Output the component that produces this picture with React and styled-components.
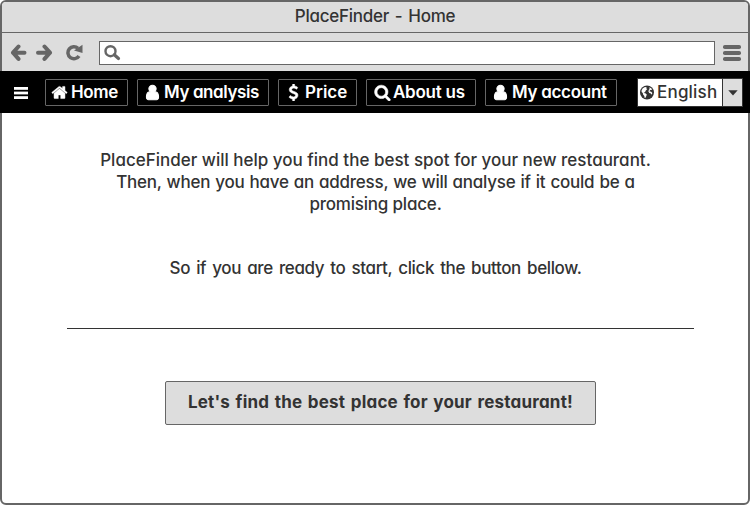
import React from 'react';
import styled, { createGlobalStyle } from 'styled-components';

const GlobalStyle = createGlobalStyle`
  * { box-sizing: border-box; }
  body { margin: 0; background: #fff; }
  button { font: inherit; margin: 0; cursor: pointer; }
`;

const Window = styled.div`
  width: 750px;
  height: 505px;
  display: flex;
  flex-direction: column;
  border: 2px solid #666;
  border-radius: 6px;
  background: #fff;
  color: #333;
  font: 500 17px/22px Inter, sans-serif;
  font-feature-settings: "cv11";
`;

const TitleBar = styled.header`
  height: 31px;
  flex: none;
  padding-top: 3px;
  background: #ddd;
  border-bottom: 1px solid #666;
  border-radius: 4px 4px 0 0;
  text-align: center;
  letter-spacing: -0.25px;
  word-spacing: 1.5px;
`;

const Toolbar = styled.div`
  height: 38px;
  flex: none;
  display: flex;
  align-items: flex-start;
  padding: 8px 7px 0 8px;
  background: #ddd;
  color: #666;
`;

const ToolIcon = styled.svg`
  display: block;
  flex: none;
  width: ${(p) => p.$w}px;
  height: ${(p) => p.$h}px;
  margin: ${(p) => p.$m};
  fill: ${(p) => (p.$line ? 'none' : 'currentColor')};
  stroke: ${(p) => (p.$line ? 'currentColor' : 'none')};
`;

const AddressBar = styled.div`
  flex: 1;
  height: 24px;
  margin-left: 16px;
  background: #fff;
  border: 1px solid #666;
`;

const Nav = styled.nav`
  height: 42px;
  flex: none;
  display: flex;
  margin: 0 -2px;
  padding: 8px 7px 0 14px;
  background: #000;
  color: #fff;
`;

const NavButton = styled.button`
  width: ${(p) => p.$w}px;
  height: 27px;
  display: flex;
  align-items: center;
  margin-right: 9px;
  padding: 0 0 1px ${(p) => p.$pad}px;
  background: #000;
  border: 1px solid #666;
  border-radius: 1px;
  color: #fff;
  font-weight: 600;
  white-space: nowrap;
  letter-spacing: ${(p) => p.$ls}px;
`;

const Glyph = styled.svg`
  display: block;
  flex: none;
  width: 17px;
  height: 17px;
  margin-right: ${(p) => p.$gap}px;
  fill: currentColor;
`;

const Select = styled.div`
  width: 106px;
  height: 29px;
  display: flex;
  margin: -1px 0 0 auto;
  background: #fff;
  border: 1px solid #333;
  color: #333;
`;

const SelectValue = styled.div`
  flex: 1;
  display: flex;
  align-items: center;
  padding: 0 0 1px 1px;
  letter-spacing: 0.2px;
`;

const SelectArrow = styled.div`
  width: 20px;
  flex: none;
  display: flex;
  align-items: center;
  justify-content: center;
  background: #ddd;
  border-left: 1px solid #333;
`;

const Content = styled.main`
  flex: 1;
  display: flex;
  flex-direction: column;
  align-items: center;
`;

const Intro = styled.p`
  margin: 36px 0 0;
  padding-left: 1px;
  text-align: center;
`;

const Line = styled.span`
  display: block;
  white-space: nowrap;
  letter-spacing: ${(p) => p.$ls || 0}px;
  word-spacing: ${(p) => p.$ws || 0}px;
`;

const Prompt = styled.p`
  margin: 42px 0 0;
  padding-left: 1px;
  letter-spacing: -0.39px;
  word-spacing: 2px;
`;

const Divider = styled.hr`
  width: 627px;
  height: 1px;
  margin: 49px 0 0 11px;
  border: 0;
  background: #333;
`;

const StartButton = styled.button`
  width: 431px;
  height: 44px;
  margin: 52px 0 0 11px !important;
  padding: 0 0 2px;
  background: #ddd;
  border: 1px solid #666;
  border-radius: 2px;
  color: #333;
  font-weight: 700;
  letter-spacing: 0.2px;
  word-spacing: 1.3px;
`;

const HOME =
  'M1472 992v480q0 26-19 45t-45 19h-384v-384h-256v384h-384q-26 0-45-19t-19-45v-480q0-1 .5-3t.5-3l575-474 575 474q1 2 1 6zm223-69l-62 74q-8 9-21 11h-3q-13 0-21-7l-692-577-692 577q-12 8-24 7-13-2-21-11l-62-74q-8-10-7-23.5t11-21.5l719-599q32-26 76-26t76 26l244 204v-195q0-14 9-23t23-9h192q14 0 23 9t9 23v408l219 182q10 8 11 21.500t-7 23.500z';
const USER =
  'M1536 1399q0 109-62.5 187t-150.5 78h-854q-88 0-150.5-78t-62.5-187q0-85 8.5-160.5t31.5-152 58.5-131 94-89 134.5-34.5q131 128 313 128t313-128q76 0 134.5 34.5t94 89 58.5 131 31.5 152 8.5 160.5zm-256-887q0 159-112.5 271.5t-271.5 112.5-271.5-112.5-112.5-271.5 112.5-271.5 271.5-112.5 271.5 112.5 112.5 271.5z';
const SEARCH =
  'M1216 832q0-185-131.5-316.5t-316.5-131.5-316.5 131.5-131.5 316.5 131.5 316.5 316.5 131.5 316.5-131.5 131.5-316.5zm512 832q0 52-38 90t-90 38q-54 0-90-38l-343-342q-179 124-399 124-143 0-273.5-55.5t-225-150-150-225-55.5-273.5 55.5-273.5 150-225 225-150 273.5-55.5 273.5 55.5 225 150 150 225 55.5 273.5q0 220-124 399l343 343q37 37 37 90z';
const DOLLAR =
  'M1362 1185q0 153-99.5 263.5t-258.5 136.500v175q0 14-9 23t-23 9h-135q-13 0-22.5-9.5t-9.5-22.5v-175q-66-9-127.5-31t-101.5-44.5-74-48-46.5-37.5-17.5-18q-17-21-2-41l103-135q7-10 23-12 15-2 24 9l2 2q113 99 243 125 37 8 74 8 81 0 142.5-43t61.5-122q0-28-15-53t-33.5-42-58.5-37.5-66-32-80-32.5q-39-16-61.5-25t-61.5-26.5-62.5-31-56.5-35.5-53.5-42.5-43.5-49-35.5-58-21-66.500-8.500-78q0-138 98-242t255-134v-180q0-13 9.500-22.500t22.500-9.500h135q14 0 23 9t9 23v176q57 6 110.5 23t87 33.5 63.5 37.5 39 29 15 14q17 18 5 38l-81 146q-8 15-23 16-14 3-27-7-3-3-14.5-12t-39-26.5-58.5-32-74.5-26-85.5-11.5q-95 0-155 43t-60 111q0 26 8.5 48t29.5 41.5 39.5 33 56 31 60.5 27 70 27.5q53 20 81 31.5t76 35 75.5 42.5 62 50 53 63.5 31.5 76.5 13 94z';

const ITEMS = [
  { label: 'Home', icon: HOME, w: 83, pad: 5, gap: 3, ls: -0.4, bold: 50 },
  { label: 'My analysis', icon: USER, w: 132, pad: 6, gap: 3, ls: -0.4, bold: 110 },
  { label: 'Price', icon: DOLLAR, w: 79, pad: 6, gap: 3, ls: 0, bold: 60 },
  { label: 'About us', icon: SEARCH, w: 110, pad: 7, gap: 2, ls: -0.25, bold: 60 },
  { label: 'My account', icon: USER, w: 132, pad: 6, gap: 3, ls: -0.3, bold: 110 },
];

export default function App() {
  return (
    <>
      <GlobalStyle />
      <Window>
        <TitleBar>PlaceFinder - Home</TitleBar>
        <Toolbar>
          <ToolIcon $w={18} $h={18} $m="3px 0 0" viewBox="0 0 18 18" $line strokeWidth="4">
            <path d="M8.500 2.500 3 8.700l5.500 6.200M3 8.700h11.500" strokeLinejoin="round" strokeLinecap="round" />
          </ToolIcon>
          <ToolIcon $w={18} $h={18} $m="3px 0 0 7px" viewBox="0 0 18 18" $line strokeWidth="4">
            <path d="M9.500 2.500 15 8.700l-5.500 6.200M15 8.700H3" strokeLinejoin="round" strokeLinecap="round" />
          </ToolIcon>
          <ToolIcon $w={17} $h={17} $m="3px 0 0 13px" viewBox="0 0 17 17">
            <path
              d="M12 4.300A6 6 0 1 0 13 12"
              fill="none"
              stroke="currentColor"
              strokeWidth="3.500"
            />
            <path d="M16.500.8V9L8 6.500z" />
          </ToolIcon>
          <AddressBar>
            <ToolIcon $w={17} $h={17} $m="3px 0 0 4px" viewBox="0 0 17 17" $line>
              <circle cx="6.500" cy="6.200" r="5" strokeWidth="2.400" />
              <path d="M10.300 9.800 14.500 13.500" strokeWidth="3.200" strokeLinecap="round" />
            </ToolIcon>
          </AddressBar>
          <ToolIcon $w={18} $h={17} $m="4px 0 0 8px" viewBox="0 0 18 17">
            <rect y="0" width="18" height="4" rx="1.800" />
            <rect y="6" width="18" height="4" rx="1.800" />
            <rect y="12" width="18" height="4" rx="1.800" />
          </ToolIcon>
        </Toolbar>
        <Nav>
          <ToolIcon $w={14} $h={12} $m="8px 17px 0 0" viewBox="0 0 14 12">
            <rect width="14" height="2.800" />
            <rect y="4.600" width="14" height="2.800" />
            <rect y="9.200" width="14" height="2.800" />
          </ToolIcon>
          {ITEMS.map((item) => (
            <NavButton key={item.label} $w={item.w} $pad={item.pad} $ls={item.ls}>
              <Glyph $gap={item.gap} viewBox="0 0 1792 1792">
                <path d={item.icon} stroke="currentColor" strokeWidth={item.bold} />
              </Glyph>
              {item.label}
            </NavButton>
          ))}
          <Select>
            <SelectValue>
              <Glyph $gap={1} viewBox="0 0 17 17">
                <circle cx="8" cy="8.500" r="7" />
                <path
                  fill="#fff"
                  d="M2.600 6.200 3.800 4.200 6 3l1.600.2-.3 1.300 1 .6-1.500 1.400-.7 1.600-1.500.8 1.700.4 1.500 1.200-.5 1.500-.8 1.700-.8.3-.4-2.100-1.200-1.500-.3-1.400-1.200-1zM10.300 3.300l1.900 1 1 1.400-2 .3-.8 1.300 1.700.4 1.300 1.300-.9 1.700-.6-1.300-1.600-.5-.9-1.500.4-1.500.8-.9z"
                />
              </Glyph>
              English
            </SelectValue>
            <SelectArrow>
              <svg width="10" height="6" viewBox="0 0 10 6">
                <path d="M.3.300h9.400L5 5.500z" fill="#333" />
              </svg>
            </SelectArrow>
          </Select>
        </Nav>
        <Content>
          <Intro>
            <Line>PlaceFinder will help you find the best spot for your new restaurant.</Line>
            <Line $ls={-0.25} $ws={0.8}>Then, when you have an address, we will analyse if it could be a</Line>
            <Line $ls={-0.2}>promising place.</Line>
          </Intro>
          <Prompt>So if you are ready to start, click the button bellow.</Prompt>
          <Divider />
          <StartButton>Let's find the best place for your restaurant!</StartButton>
        </Content>
      </Window>
    </>
  );
}
